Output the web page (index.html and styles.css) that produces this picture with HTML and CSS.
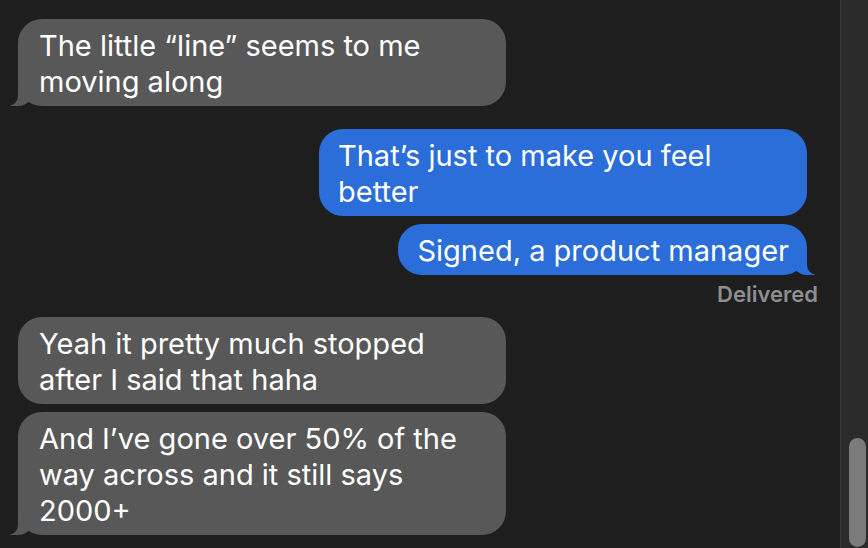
FILE: index.html
```html
<!DOCTYPE html>
<html lang="en">
<head>
    <meta charset="UTF-8">
    <meta name="viewport" content="width=device-width, initial-scale=1.0">
    <title>Messages</title>
    <link rel="stylesheet" href="styles.css">
</head>
<body>
    <div class="thread">
        <div class="msg in wide tail">The little “line” seems to me<br>moving along</div>

        <div class="msg out wide gap">That’s just to make you feel<br>better</div>
        <div class="msg out tail">Signed, a product manager</div>
        <div class="status">Delivered</div>

        <div class="msg in wide">Yeah it pretty much stopped<br>after I said that haha</div>
        <div class="msg in wide tail">And I’ve gone over 50% of the<br>way across and it still says<br>2000+</div>
    </div>

    <div class="scrollbar">
        <div class="thumb"></div>
    </div>
</body>
</html>
```

FILE: styles.css
```css
html, body {
    height: 100%;
}
body {
    margin: 0;
    background-color: #1e1e1e;
    font-family: Inter, "Noto Sans", sans-serif;
    color: #fff;
    display: flex;
    overflow: hidden;
}
.thread {
    flex: 1;
    display: flex;
    flex-direction: column;
    gap: 8px;
    padding: 19px 33px 0 18px;
}
.msg {
    position: relative;
    box-sizing: border-box;
    width: fit-content;
    padding: 9px 18px 6px 21px;
    border-radius: 24px;
    font-size: 29px;
    line-height: 36px;
    white-space: nowrap;
}
.wide {
    width: 488px;
}
.in {
    align-self: flex-start;
    background-color: #585858;
}
.out {
    align-self: flex-end;
    background-color: #2b6ed9;
    padding-left: 19px;
}
.gap {
    margin-top: 15px;
}
/* bubble tails */
.tail::before, .tail::after {
    content: "";
    position: absolute;
    bottom: 0;
    height: 22px;
}
.in.tail::before {
    left: -8px;
    width: 24px;
    background-color: #585858;
    border-bottom-right-radius: 16px;
}
.in.tail::after {
    left: -12px;
    width: 12px;
    background-color: #1e1e1e;
    border-bottom-right-radius: 10px;
}
.out.tail::before {
    right: -8px;
    width: 24px;
    background-color: #2b6ed9;
    border-bottom-left-radius: 16px;
}
.out.tail::after {
    right: -12px;
    width: 12px;
    background-color: #1e1e1e;
    border-bottom-left-radius: 10px;
}
.status {
    align-self: flex-end;
    margin: -1px -11px 3px 0;
    font-size: 22px;
    line-height: 24px;
    font-weight: 600;
    color: #8d8d92;
}
.scrollbar {
    width: 25px;
    border-left: 1px solid #3b3b3b;
    background-color: #2b2b2b;
    display: flex;
    flex-direction: column;
    justify-content: flex-end;
    align-items: flex-end;
    padding-right: 2px;
}
.thumb {
    width: 17px;
    height: 109px;
    margin-bottom: 1px;
    border-radius: 9px;
    background-color: #7b7b7b;
}
```
